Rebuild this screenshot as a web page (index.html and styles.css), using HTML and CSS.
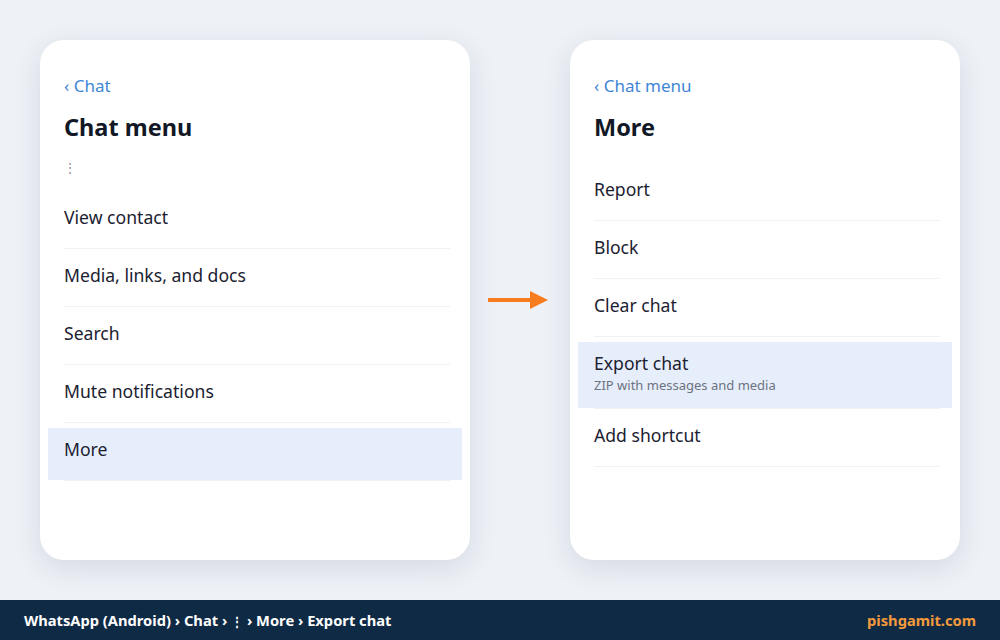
FILE: index.html
```html
<!DOCTYPE html>
<html lang="en">
<head>
<meta charset="utf-8">
<title>Export chat</title>
<link rel="stylesheet" href="styles.css">
</head>
<body>
<main class="stage">
  <section class="card card-wide">
    <a class="back">‹ Chat</a>
    <h1 class="title">Chat menu</h1>
    <p class="hint">⋮</p>
    <ul class="menu">
      <li><div class="row">View contact</div></li>
      <li><div class="row">Media, links, and docs</div></li>
      <li><div class="row">Search</div></li>
      <li><div class="row">Mute notifications</div></li>
      <li><div class="row active">More</div></li>
    </ul>
  </section>

  <div class="arrow" aria-hidden="true">
    <svg width="60" height="20" viewBox="0 0 60 20">
      <rect x="0" y="8" width="44" height="4" fill="#f97c1c"/>
      <polygon points="42,1 60,10 42,19" fill="#f97c1c"/>
    </svg>
  </div>

  <section class="card card-narrow">
    <a class="back">‹ Chat menu</a>
    <h1 class="title">More</h1>
    <ul class="menu">
      <li><div class="row">Report</div></li>
      <li><div class="row">Block</div></li>
      <li><div class="row">Clear chat</div></li>
      <li><div class="row active">Export chat<span class="sub">ZIP with messages and media</span></div></li>
      <li><div class="row">Add shortcut</div></li>
    </ul>
  </section>
</main>
<footer class="bar">
  <span class="crumbs">WhatsApp (Android) › Chat › <span class="dots">⋮</span> › More › Export chat</span>
  <span class="brand">pishgamit.com</span>
</footer>
</body>
</html>
```

FILE: styles.css
```css
* { box-sizing: border-box; }

html, body {
  margin: 0;
  padding: 0;
}

body {
  width: 1000px;
  height: 640px;
  background: #eef1f6;
  font-family: "Noto Sans", "Open Sans", sans-serif;
  color: #1b2130;
  overflow: hidden;
}

.stage {
  height: 600px;
  display: flex;
  align-items: center;
  padding-left: 40px;
}

.card {
  height: 520px;
  background: #ffffff;
  border-radius: 24px;
  box-shadow: 0 8px 28px rgba(30, 50, 90, 0.12);
  padding: 34px 20px 0 24px;
}

.card-wide { width: 430px; }
.card-narrow { width: 390px; }

.back {
  display: block;
  font-size: 17px;
  line-height: 24px;
  color: #3f86d6;
}

.title {
  margin: 13px 0 14px;
  font-size: 23.5px;
  line-height: 32px;
  font-weight: 700;
  color: #121826;
}

.hint {
  margin: 0 0 6px;
  font-size: 12px;
  line-height: 22px;
  color: #85888f;
}

.menu {
  list-style: none;
  margin: 0;
  padding: 11px 0 0;
}

.menu li {
  border-bottom: 1px solid #eef1f5;
  margin-bottom: 5px;
}

.row {
  margin: 0 -12px 0 -16px;
  padding: 9px 12px 13px 16px;
  min-height: 52px;
  font-size: 17.6px;
  line-height: 24px;
  color: #1b2130;
}

.row.active {
  background: #e7eefb;
}

.sub {
  display: block;
  font-size: 13px;
  line-height: 20px;
  color: #6b7280;
}

.arrow {
  width: 60px;
  margin: 0 22px 0 18px;
  display: flex;
}

.bar {
  height: 40px;
  background: #0f2a45;
  display: flex;
  align-items: center;
  justify-content: space-between;
  padding: 0 24px;
  font-size: 14.7px;
  font-weight: 700;
}

.crumbs { color: #ffffff; }
.dots { font-size: 12px; }
.brand { color: #f49a3c; }
```
